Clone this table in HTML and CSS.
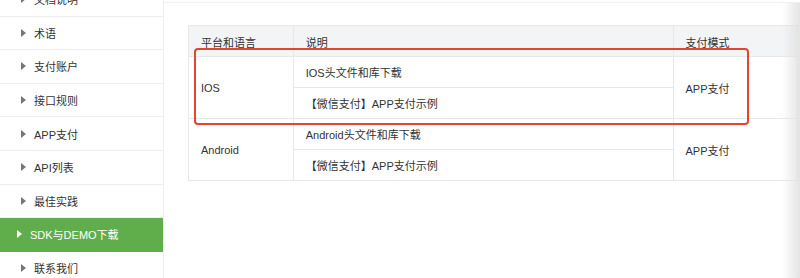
FILE: index.html
```html
<!DOCTYPE html>
<html lang="zh">
<head>
<meta charset="utf-8">
<link rel="stylesheet" href="styles.css">
</head>
<body>
<div class="page">
  <nav class="sidebar">
    <ul class="menu">
      <li class="item"><span class="arrow"></span><span>文档说明</span></li>
      <li class="item"><span class="arrow"></span><span>术语</span></li>
      <li class="item"><span class="arrow"></span><span>支付账户</span></li>
      <li class="item"><span class="arrow"></span><span>接口规则</span></li>
      <li class="item"><span class="arrow"></span><span>APP支付</span></li>
      <li class="item"><span class="arrow"></span><span>API列表</span></li>
      <li class="item"><span class="arrow"></span><span>最佳实践</span></li>
      <li class="item active"><span class="arrow"></span><span>SDK与DEMO下载</span></li>
      <li class="item"><span class="arrow"></span><span>联系我们</span></li>
    </ul>
  </nav>
  <main class="main">
    <div class="table-wrap">
      <table class="sdk">
        <thead>
          <tr><th class="c1">平台和语言</th><th class="c2">说明</th><th class="c3">支付模式</th></tr>
        </thead>
        <tbody>
          <tr><td rowspan="2">IOS</td><td>IOS头文件和库下载</td><td rowspan="2">APP支付</td></tr>
          <tr><td>【微信支付】APP支付示例</td></tr>
          <tr><td rowspan="2">Android</td><td>Android头文件和库下载</td><td rowspan="2">APP支付</td></tr>
          <tr><td>【微信支付】APP支付示例</td></tr>
        </tbody>
      </table>
      <div class="highlight"></div>
    </div>
    <div class="edge-shade"></div>
  </main>
</div>
</body>
</html>
```

FILE: styles.css
```css
html, body {
  margin: 0;
  padding: 0;
  background: #fff;
}
body {
  font-family: "Liberation Sans", "Noto Sans CJK SC", sans-serif;
  font-size: 11px;
  color: #333;
  width: 800px;
  height: 278px;
  overflow: hidden;
}
.page {
  display: flex;
  height: 278px;
}
.sidebar {
  width: 163px;
  flex: none;
  border-right: 1px solid #ececec;
  overflow: hidden;
}
.menu {
  list-style: none;
  margin: -17px 0 0 0;
  padding: 0;
}
.item {
  display: flex;
  align-items: center;
  height: 32.6px;
  border-bottom: 1px solid #eeeeee;
  padding-left: 21px;
  color: #333;
}
.arrow {
  width: 0;
  height: 0;
  border-left: 5px solid #777;
  border-top: 4px solid transparent;
  border-bottom: 4px solid transparent;
  margin-right: 8px;
}
.item.active {
  background: #5fae4b;
  color: #fff;
  padding-left: 17px;
  border-bottom-color: #5fae4b;
}
.item.active .arrow {
  border-left-color: #fff;
}
.main {
  flex: 1;
  position: relative;
  margin-top: 2px;
  border-top: 1px solid #f0f0f0;
  padding: 22px 0 0 24px;
  overflow: hidden;
}
.table-wrap {
  position: relative;
}
.sdk {
  border-collapse: collapse;
  width: 610px;
  border: 1px solid #e8e8e8;
  border-right: none;
}
.sdk th, .sdk td {
  border: 1px solid #e8e8e8;
  height: 30px;
  padding: 0 12px;
  text-align: left;
  font-weight: normal;
  vertical-align: middle;
  white-space: nowrap;
}
.sdk th {
  background: #f3f4f6;
  padding-top: 2px;
  height: 28px;
}
.sdk .c1 { width: 80px; }
.sdk .c2 { width: 357px; }
.sdk .c3 { width: 100px; }
.highlight {
  position: absolute;
  left: 6px;
  top: 23px;
  width: 551px;
  height: 73px;
  border: 2px solid #e3452d;
  border-radius: 4px;
}
.edge-shade {
  position: absolute;
  top: 0;
  right: 0;
  width: 18px;
  height: 100%;
  background: linear-gradient(to right, rgba(235,235,235,0), rgba(225,225,225,0.9));
}
```
